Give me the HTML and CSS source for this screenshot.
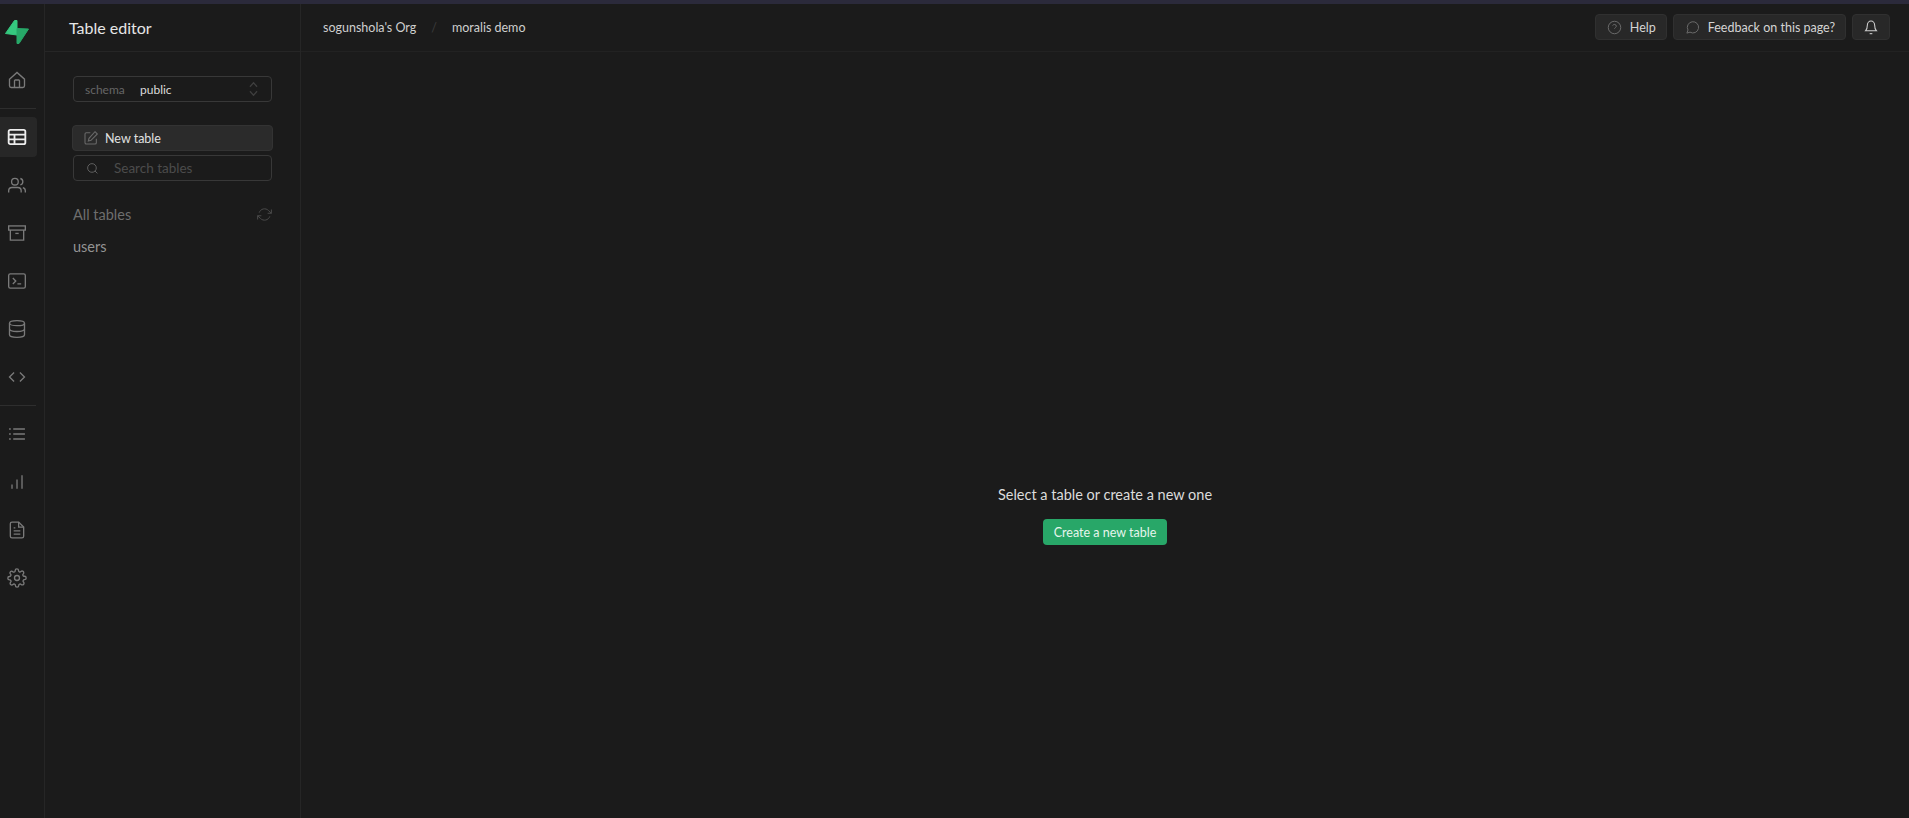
FILE: index.html
```html
<!DOCTYPE html>
<html>
<head>
	<title>Table editor</title>
	<meta name="viewport" content="width=device-width, initial-scale=1">
	<link rel="stylesheet" href="styles.css">
</head>
<body>
	<div class="topstrip"></div>
	<div class="app">
		<!-- icon rail -->
		<nav class="rail">
			<div class="logo">
				<svg width="26" height="26" viewBox="0 0 26 26">
					<path d="M10.5 1.5 L13 1.5 L13 16 L1.5 14.5 Z" fill="#35c97f" stroke="#35c97f" stroke-linejoin="round"/>
					<path d="M13 9.5 L24.5 10 L15 24.5 L13 24.5 Z" fill="#27a868" stroke="#27a868" stroke-linejoin="round"/>
				</svg>
			</div>
			<a class="rail-item">
				<svg class="ic" viewBox="0 0 24 24"><path d="M3 11 L12 3 L21 11 V19 Q21 21 19 21 H5 Q3 21 3 19 Z"/><path d="M9 21 V13 Q9 12 10 12 H14 Q15 12 15 13 V21"/></svg>
			</a>
			<div class="rail-line"></div>
			<a class="rail-item active">
				<svg class="ic" viewBox="0 0 24 24"><rect x="2" y="3.5" width="20" height="17" rx="2"/><path d="M2 9.2 H22 M2 14.8 H22 M9 9.2 V20.5"/></svg>
			</a>
			<a class="rail-item">
				<svg class="ic" viewBox="0 0 24 24"><circle cx="9.5" cy="8" r="4"/><path d="M2 21 V19 Q2 15 6 15 H13 Q17 15 17 19 V21"/><path d="M16 4.2 Q19 5 19 8 Q19 11 16 11.8"/><path d="M19 15.2 Q22 16 22 19 V21"/></svg>
			</a>
			<a class="rail-item">
				<svg class="ic" viewBox="0 0 24 24"><rect x="2" y="3.5" width="20" height="5"/><path d="M4 8.5 V20.5 H20 V8.5"/><path d="M10 12.5 H14"/></svg>
			</a>
			<a class="rail-item">
				<svg class="ic" viewBox="0 0 24 24"><rect x="2" y="3.5" width="20" height="17" rx="2"/><path d="M7 8.5 L10.5 12 L7 15.5 M12.5 15.5 H17"/></svg>
			</a>
			<a class="rail-item">
				<svg class="ic" viewBox="0 0 24 24"><ellipse cx="12" cy="5" rx="9" ry="3"/><path d="M3 5 V19 Q3 22 12 22 Q21 22 21 19 V5"/><path d="M3 12 Q3 15 12 15 Q21 15 21 12"/></svg>
			</a>
			<a class="rail-item">
				<svg class="ic" viewBox="0 0 24 24"><path d="M8.5 6.5 L3 12 L8.5 17.5 M15.5 6.5 L21 12 L15.5 17.5"/></svg>
			</a>
			<div class="rail-line"></div>
			<a class="rail-item">
				<svg class="ic" viewBox="0 0 24 24"><path d="M7.5 6 H21.5 M7.5 12 H21.5 M7.5 18 H21.5 M2.5 6 H4.5 M2.5 12 H4.5 M2.5 18 H4.5"/></svg>
			</a>
			<a class="rail-item">
				<svg class="ic" viewBox="0 0 24 24"><path d="M6 20 V15 M12 20 V9 M18 20 V4"/></svg>
			</a>
			<a class="rail-item">
				<svg class="ic" viewBox="0 0 24 24"><path d="M6 2.5 H14 L20 8.5 V19.5 Q20 21.5 18 21.5 H6 Q4 21.5 4 19.5 V4.5 Q4 2.5 6 2.5 Z"/><path d="M14 2.5 V8.5 H20 M8 9.5 H10 M8 13 H16 M8 17 H16"/></svg>
			</a>
			<a class="rail-item">
				<svg class="ic" viewBox="0 0 24 24"><circle cx="12" cy="12" r="3"/><path d="M19.4 15a1.65 1.65 0 0 0 .33 1.82l.06.06a2 2 0 1 1-2.83 2.83l-.06-.06a1.65 1.65 0 0 0-2.8 1.17V21a2 2 0 1 1-4 0v-.09a1.65 1.65 0 0 0-2.88-1.11l-.06.06a2 2 0 1 1-2.83-2.83l.06-.06a1.65 1.65 0 0 0-1.17-2.8H3a2 2 0 1 1 0-4h.09a1.65 1.65 0 0 0 1.11-2.88l-.06-.06a2 2 0 1 1 2.83-2.83l.06.06a1.65 1.65 0 0 0 2.8-1.17V3a2 2 0 1 1 4 0v.09a1.65 1.65 0 0 0 2.8 1.17l.06-.06a2 2 0 1 1 2.83 2.83l-.06.06a1.65 1.65 0 0 0 1.17 2.8H21a2 2 0 1 1 0 4h-.09a1.65 1.65 0 0 0-1.51 1z"/></svg>
			</a>
		</nav>

		<!-- table sidebar -->
		<aside class="side">
			<div class="side-head">Table editor</div>
			<div class="side-body">
				<div class="schema">
					<span class="schema-label">schema</span>
					<span class="schema-value">public</span>
					<svg class="updown" viewBox="0 0 12 18"><path d="M2 6.5 L6 2 L10 6.5 M2 11.5 L6 16 L10 11.5"/></svg>
				</div>
				<button class="new-table">
					<svg class="ic-sm" viewBox="0 0 24 24"><path d="M11 4 H5 Q3 4 3 6 V19 Q3 21 5 21 H18 Q20 21 20 19 V13"/><path d="M18 2.5 L21.5 6 L12 15.5 L8 16.5 L9 12.5 Z"/></svg>
					New table
				</button>
				<div class="search">
					<svg class="ic-xs" viewBox="0 0 24 24"><circle cx="11" cy="11" r="8"/><path d="M21 21 L16.7 16.7"/></svg>
					<span>Search tables</span>
				</div>
				<div class="all-tables">
					<span>All tables</span>
					<svg class="ic-refresh" viewBox="0 0 24 24"><path d="M23 4 V10 H17 M1 20 V14 H7"/><path d="M3.5 9 A9 9 0 0 1 18.4 5.6 L23 10 M1 14 L5.6 18.4 A9 9 0 0 0 20.5 15"/></svg>
				</div>
				<div class="table-link">users</div>
			</div>
		</aside>

		<main class="main">
			<header class="top">
				<div class="crumbs">
					<span>sogunshola's Org</span>
					<span class="slash">/</span>
					<span>moralis demo</span>
				</div>
				<div class="actions">
					<button class="btn">
						<svg class="ic-btn" viewBox="0 0 24 24"><circle cx="12" cy="12" r="10"/><path d="M9.1 9 A3 3 0 0 1 14.9 10 C14.9 12 12 12.5 12 14 M12 17.5 V17.6"/></svg>
						Help
					</button>
					<button class="btn">
						<svg class="ic-btn" viewBox="0 0 24 24"><path d="M3 21 L4.8 16 A9 9 0 1 1 8 19.4 Z"/></svg>
						Feedback on this page?
					</button>
					<button class="btn bell">
						<svg class="ic-bell" viewBox="0 0 24 24"><path d="M4 17.5 Q6.5 15 6.5 9.5 A5.5 6.5 0 0 1 17.5 9.5 Q17.5 15 20 17.5 Z"/><path d="M10 22 H14"/></svg>
					</button>
				</div>
			</header>
			<div class="empty">
				<p>Select a table or create a new one</p>
				<button class="create">Create a new table</button>
			</div>
		</main>
	</div>
</body>
</html>
```

FILE: styles.css
```css
* {box-sizing: border-box;}

html, body {
	margin: 0;
	height: 100%;
	overflow: hidden;
}

body {
	background-color: #1b1b1b;
	color: #ededed;
	font-family: "Lato", "Liberation Sans", sans-serif;
	font-size: 13px;
	display: flex;
	flex-direction: column;
}

.topstrip {
	height: 4px;
	background-color: #2b2a3b;
}

.app {
	flex: 1;
	display: flex;
	min-height: 0;
}

/* icon rail */
.rail {
	width: 45px;
	border-right: 1px solid #262626;
	display: flex;
	flex-direction: column;
	gap: 8px;
	flex-shrink: 0;
}

.logo {
	height: 48px;
	padding: 8px 0 0 4px;
	display: flex;
	align-items: center;
}

.rail-item {
	width: 37px;
	height: 40px;
	padding-right: 3px;
	display: flex;
	align-items: center;
	justify-content: center;
	border-radius: 0 4px 4px 0;
}

.rail-item.active {
	background-color: #272727;
}

.rail-line {
	width: 36px;
	height: 1px;
	background-color: #2e2e2e;
}

.ic {
	width: 20px;
	height: 20px;
	fill: none;
	stroke: #7a7a7a;
	stroke-width: 1.6;
}

.active .ic {
	stroke: #ededed;
	stroke-width: 2.2;
}

.ic-sm {
	width: 16px;
	height: 16px;
	fill: none;
	stroke: #6a6a6a;
	stroke-width: 1.6;
}

.ic-xs {
	width: 13px;
	height: 13px;
	fill: none;
	stroke: #6a6a6a;
	stroke-width: 1.6;
}

.ic-btn {
	width: 15px;
	height: 15px;
	fill: none;
	stroke: #6a6a6a;
	stroke-width: 1.6;
}

.ic-bell {
	width: 16px;
	height: 16px;
	fill: none;
	stroke: #d0d0d0;
	stroke-width: 1.6;
}

.ic-refresh {
	width: 15px;
	height: 15px;
	fill: none;
	stroke: #4a4a4a;
	stroke-width: 1.6;
}

/* table sidebar */
.side {
	width: 256px;
	border-right: 1px solid #262626;
	flex-shrink: 0;
}

.side-head {
	height: 48px;
	border-bottom: 1px solid #262626;
	padding: 0 0 1px 24px;
	display: flex;
	align-items: center;
	font-size: 16px;
	color: #e6e6e6;
}

.side-body {
	padding: 24px 27px 0 27px;
}

.schema {
	height: 26px;
	margin: 0 1px;
	border: 1px solid #383838;
	border-radius: 4px;
	display: flex;
	align-items: center;
	padding: 0 12px 0 11px;
	font-size: 12px;
}

.schema-label {
	color: #666;
	width: 55px;
}

.schema-value {
	color: #dcdcdc;
	flex: 1;
}

.updown {
	width: 11px;
	height: 16px;
	fill: none;
	stroke: #3e3e3e;
	stroke-width: 1.5;
}

.new-table {
	width: 100%;
	height: 26px;
	margin-top: 23px;
	display: flex;
	align-items: center;
	gap: 6px;
	padding: 0 10px;
	background-color: #2b2b2b;
	border: 1px solid #333;
	border-radius: 4px;
	color: #e0e0e0;
	font-family: inherit;
	font-size: 12.5px;
}

.search {
	height: 26px;
	margin: 4px 1px 0;
	border: 1px solid #383838;
	border-radius: 4px;
	display: flex;
	align-items: center;
	gap: 15px;
	padding: 0 12px;
	color: #4c4c4c;
	font-size: 13.5px;
}

.all-tables {
	margin-top: 25px;
	padding: 0 1px;
	display: flex;
	align-items: center;
	justify-content: space-between;
	color: #6e6e6e;
	font-size: 14.5px;
}

.table-link {
	margin-top: 15px;
	padding-left: 1px;
	color: #949494;
	font-size: 14.5px;
}

/* main area */
.main {
	flex: 1;
	display: flex;
	flex-direction: column;
	min-width: 0;
}

.top {
	height: 48px;
	border-bottom: 1px solid #222;
	display: flex;
	align-items: center;
	justify-content: space-between;
	padding: 0 19px 1px 22px;
}

.crumbs {
	display: flex;
	align-items: center;
	gap: 15px;
	font-size: 12.5px;
	color: #cfcfcf;
}

.slash {
	color: #3c3c3c;
}

.actions {
	display: flex;
	gap: 6px;
}

.btn {
	height: 26px;
	display: flex;
	align-items: center;
	gap: 8px;
	padding: 0 10px 0 11px;
	background-color: #282828;
	border: 1px solid #303030;
	border-radius: 4px;
	color: #d4d4d4;
	font-family: inherit;
	font-size: 12.5px;
}

.bell {
	width: 38px;
	justify-content: center;
	padding: 0;
}

.empty {
	flex: 1;
	display: flex;
	flex-direction: column;
	align-items: center;
	padding-top: 434px;
}

.empty p {
	margin: 0;
	font-size: 14.5px;
	color: #dcdcdc;
}

.create {
	margin-top: 16px;
	height: 26px;
	padding: 0 11px;
	background-color: #28a768;
	border: none;
	border-radius: 4px;
	color: #e6f5ec;
	font-family: inherit;
	font-size: 12.5px;
}
```
